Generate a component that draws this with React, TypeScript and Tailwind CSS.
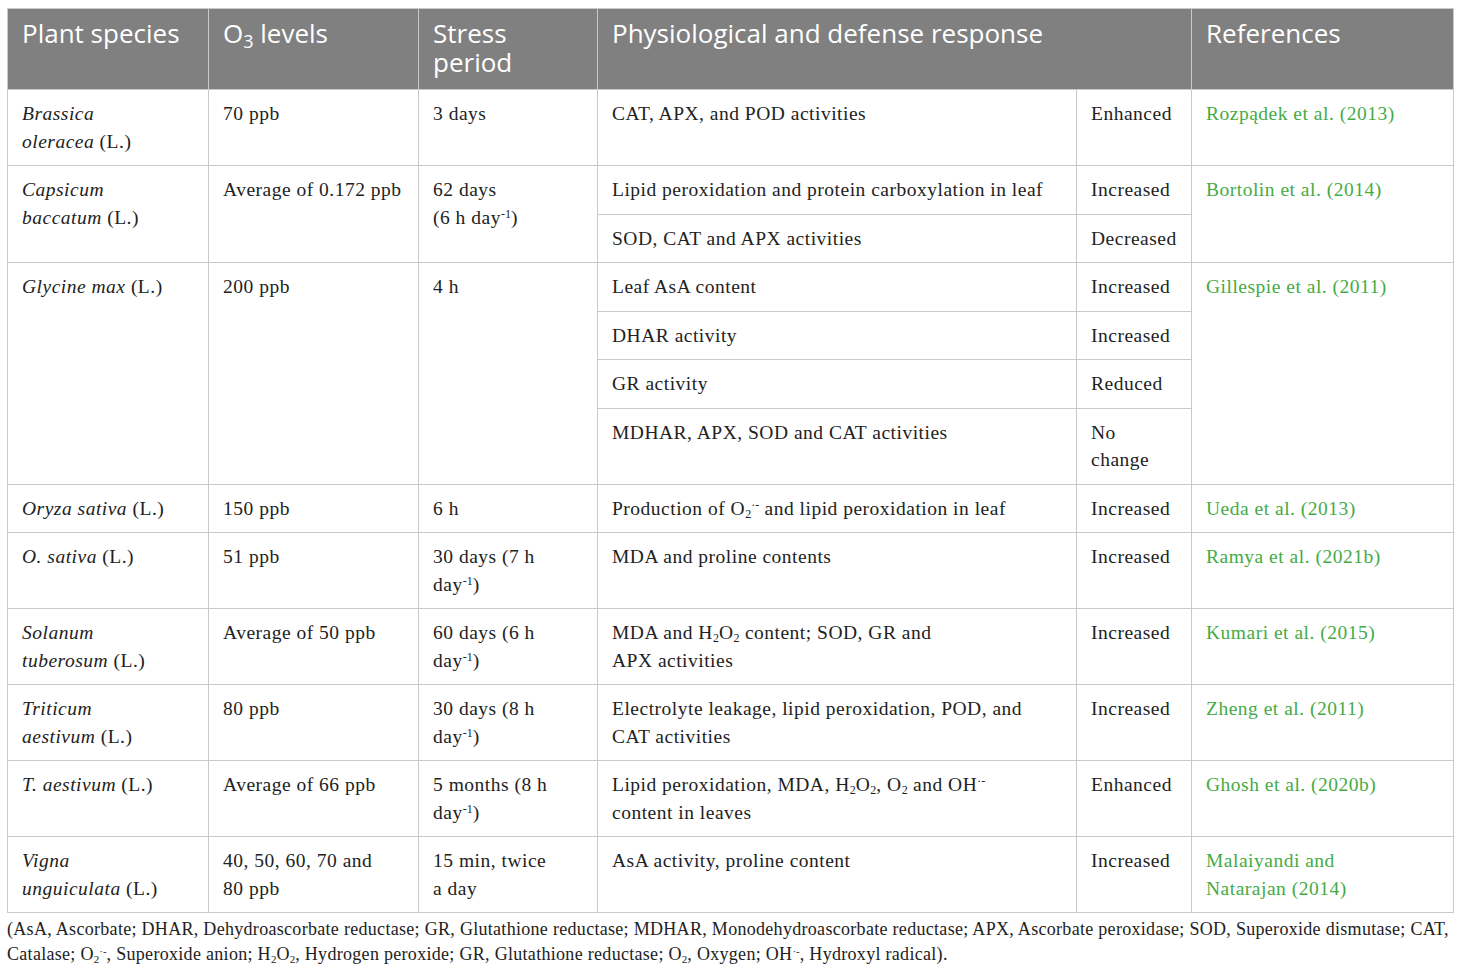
import React from "react";

const serif = { fontFamily: '"Liberation Serif", "DejaVu Serif", serif' };

function Day({ lead }: { lead: string }) {
  return (
    <>
      {lead}day<sup className="text-[12px] tracking-normal">-1</sup>)
    </>
  );
}

const td = "border border-[#c9c9c9] px-[14px] pt-[10px] pb-[10px] align-top";
const th =
  "border border-[#c9c9c9] bg-[#808080] px-[14px] pt-[10px] pb-[10px] text-left align-top font-normal text-white";
const ref = "text-[#45ab45]";
const s = "text-[12px] tracking-normal";
const fs = "text-[11px] tracking-normal";

function Species({ genus, epithet }: { genus: string; epithet?: string }) {
  return (
    <>
      <i>{genus}</i>
      {epithet ? (
        <>
          <br />
          <i>{epithet}</i>
        </>
      ) : null}{" "}
      (L.)
    </>
  );
}

export default function App() {
  return (
    <div className="bg-white px-[7px] pt-2 text-[#222]" style={serif}>
      <table className="w-[1446px] table-fixed border-collapse text-[19.5px] leading-[27.5px] tracking-[0.5px]">
        <colgroup>
          <col className="w-[201px]" />
          <col className="w-[210px]" />
          <col className="w-[179px]" />
          <col className="w-[479px]" />
          <col className="w-[115px]" />
          <col className="w-[262px]" />
        </colgroup>
        <thead style={{ fontFamily: '"Open Sans", "Noto Sans", sans-serif' }}>
          <tr className="text-[26px] leading-[29px] tracking-normal">
            <th className={th}>Plant species</th>
            <th className={th}>
              O<sub className="text-[18px]">3</sub> levels
            </th>
            <th className={`${th} pb-[12px]`}>
              Stress
              <br />
              period
            </th>
            <th className={th} colSpan={2}>
              Physiological and defense response
            </th>
            <th className={th}>References</th>
          </tr>
        </thead>
        <tbody>
          <tr>
            <td className={td}>
              <Species genus="Brassica" epithet="oleracea" />
            </td>
            <td className={td}>70 ppb</td>
            <td className={td}>3 days</td>
            <td className={td}>CAT, APX, and POD activities</td>
            <td className={td}>Enhanced</td>
            <td className={`${td} ${ref}`}>Rozpądek et al. (2013)</td>
          </tr>
          <tr>
            <td className={td} rowSpan={2}>
              <Species genus="Capsicum" epithet="baccatum" />
            </td>
            <td className={td} rowSpan={2}>
              Average of 0.172 ppb
            </td>
            <td className={td} rowSpan={2}>
              62 days
              <br />
              <Day lead="(6 h " />
            </td>
            <td className={td}>Lipid peroxidation and protein carboxylation in leaf</td>
            <td className={td}>Increased</td>
            <td className={`${td} ${ref}`} rowSpan={2}>
              Bortolin et al. (2014)
            </td>
          </tr>
          <tr>
            <td className={td}>SOD, CAT and APX activities</td>
            <td className={td}>Decreased</td>
          </tr>
          <tr>
            <td className={td} rowSpan={4}>
              <Species genus="Glycine max" />
            </td>
            <td className={td} rowSpan={4}>
              200 ppb
            </td>
            <td className={td} rowSpan={4}>
              4 h
            </td>
            <td className={td}>Leaf AsA content</td>
            <td className={td}>Increased</td>
            <td className={`${td} ${ref}`} rowSpan={4}>
              Gillespie et al. (2011)
            </td>
          </tr>
          <tr>
            <td className={td}>DHAR activity</td>
            <td className={td}>Increased</td>
          </tr>
          <tr>
            <td className={td}>GR activity</td>
            <td className={td}>Reduced</td>
          </tr>
          <tr>
            <td className={td}>MDHAR, APX, SOD and CAT activities</td>
            <td className={td}>
              No
              <br />
              change
            </td>
          </tr>
          <tr>
            <td className={td}>
              <Species genus="Oryza sativa" />
            </td>
            <td className={td}>150 ppb</td>
            <td className={td}>6 h</td>
            <td className={td}>
              Production of O<sub className={s}>2</sub>
              <sup className={s}>·-</sup> and lipid peroxidation in leaf
            </td>
            <td className={td}>Increased</td>
            <td className={`${td} ${ref}`}>Ueda et al. (2013)</td>
          </tr>
          <tr>
            <td className={td}>
              <Species genus="O. sativa" />
            </td>
            <td className={td}>51 ppb</td>
            <td className={td}>
              30 days (7 h
              <br />
              <Day lead="" />
            </td>
            <td className={td}>MDA and proline contents</td>
            <td className={td}>Increased</td>
            <td className={`${td} ${ref}`}>Ramya et al. (2021b)</td>
          </tr>
          <tr>
            <td className={td}>
              <Species genus="Solanum" epithet="tuberosum" />
            </td>
            <td className={td}>Average of 50 ppb</td>
            <td className={td}>
              60 days (6 h
              <br />
              <Day lead="" />
            </td>
            <td className={td}>
              MDA and H<sub className={s}>2</sub>O<sub className={s}>2</sub> content; SOD, GR and
              <br />
              APX activities
            </td>
            <td className={td}>Increased</td>
            <td className={`${td} ${ref}`}>Kumari et al. (2015)</td>
          </tr>
          <tr>
            <td className={td}>
              <Species genus="Triticum" epithet="aestivum" />
            </td>
            <td className={td}>80 ppb</td>
            <td className={td}>
              30 days (8 h
              <br />
              <Day lead="" />
            </td>
            <td className={td}>
              Electrolyte leakage, lipid peroxidation, POD, and
              <br />
              CAT activities
            </td>
            <td className={td}>Increased</td>
            <td className={`${td} ${ref}`}>Zheng et al. (2011)</td>
          </tr>
          <tr>
            <td className={td}>
              <Species genus="T. aestivum" />
            </td>
            <td className={td}>Average of 66 ppb</td>
            <td className={td}>
              5 months (8 h
              <br />
              <Day lead="" />
            </td>
            <td className={td}>
              Lipid peroxidation, MDA, H<sub className={s}>2</sub>O<sub className={s}>2</sub>, O
              <sub className={s}>2</sub> and OH<sup className={s}>·-</sup>
              <br />
              content in leaves
            </td>
            <td className={td}>Enhanced</td>
            <td className={`${td} ${ref}`}>Ghosh et al. (2020b)</td>
          </tr>
          <tr>
            <td className={td}>
              <Species genus="Vigna" epithet="unguiculata" />
            </td>
            <td className={td}>
              40, 50, 60, 70 and
              <br />
              80 ppb
            </td>
            <td className={td}>
              15 min, twice
              <br />a day
            </td>
            <td className={td}>AsA activity, proline content</td>
            <td className={td}>Increased</td>
            <td className={`${td} ${ref}`}>
              Malaiyandi and
              <br />
              Natarajan (2014)
            </td>
          </tr>
        </tbody>
      </table>
      <p className="w-[1452px] pt-[4px] text-[18px] leading-[25px] tracking-[0.3px] text-[#222]">
        (AsA, Ascorbate; DHAR, Dehydroascorbate reductase; GR, Glutathione reductase; MDHAR, Monodehydroascorbate
        reductase; APX, Ascorbate peroxidase; SOD, Superoxide dismutase; CAT, Catalase; O<sub className={fs}>2</sub>
        <sup className={fs}>·-</sup>, Superoxide anion; H<sub className={fs}>2</sub>O<sub className={fs}>2</sub>,
        Hydrogen peroxide; GR, Glutathione reductase; O<sub className={fs}>2</sub>, Oxygen; OH
        <sup className={fs}>·-</sup>, Hydroxyl radical).
      </p>
    </div>
  );
}
